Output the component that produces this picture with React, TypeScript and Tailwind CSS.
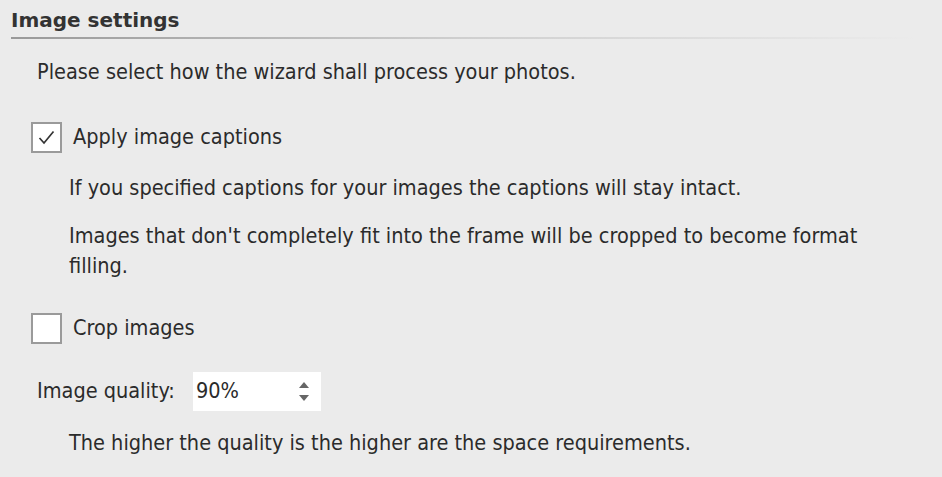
import React, { useState } from "react";

function CheckBox({ checked, onClick }: { checked: boolean; onClick: () => void }) {
  return (
    <button
      onClick={onClick}
      className="w-[31px] h-[31px] border-2 border-[#9a9a9a] bg-white flex items-center justify-center"
    >
      {checked && (
        <svg width="17" height="15" viewBox="0 0 17 15">
          <path d="M1.5 8 L6 13 L15.5 1.5" fill="none" stroke="#333" strokeWidth="1.7" />
        </svg>
      )}
    </button>
  );
}

export default function App() {
  const [captions, setCaptions] = useState(true);
  const [crop, setCrop] = useState(false);
  const [quality, setQuality] = useState(90);

  return (
    <div
      className="w-[942px] h-[477px] bg-[#ebebeb] text-[#2b2b2b] text-[21.5px] overflow-hidden"
      style={{ fontFamily: "'DejaVu Sans Condensed', 'DejaVu Sans', Verdana, sans-serif" }}
    >
      {/* Titel */}
      <div className="pl-[11px] pt-[6px]" style={{ fontFamily: "'DejaVu Sans', Verdana, sans-serif" }}>
        <h1 className="font-bold text-[20px] leading-[28px] text-[#333]">Image settings</h1>
        <div className="mt-[3px] h-[2px] w-[905px] bg-gradient-to-r from-[#999] via-[#cfcfcf] to-[#ebebeb]" />
      </div>

      <p className="ml-[37px] mt-[18px] leading-[30px]">Please select how the wizard shall process your photos.</p>

      <div className="ml-[31px] mt-[34px] flex items-center gap-[11px]">
        <CheckBox checked={captions} onClick={() => setCaptions(!captions)} />
        <span>Apply image captions</span>
      </div>

      <div className="ml-[69px] mt-[20px] space-y-[18px] leading-[30px] pr-[40px]">
        <p>If you specified captions for your images the captions will stay intact.</p>
        <p>Images that don't completely fit into the frame will be cropped to become format filling.</p>
      </div>

      <div className="ml-[31px] mt-[31px] flex items-center gap-[11px]">
        <CheckBox checked={crop} onClick={() => setCrop(!crop)} />
        <span>Crop images</span>
      </div>

      <div className="ml-[37px] mt-[27px] flex items-center">
        <span className="w-[156px]">Image quality:</span>
        <div className="w-[128px] h-[39px] bg-white flex items-center pl-[3px] pr-[12px]">
          <span className="flex-1">{quality}%</span>
          <div className="flex flex-col gap-[7px]">
            <button onClick={() => setQuality(Math.min(100, quality + 1))}>
              <svg width="10" height="6" viewBox="0 0 10 6"><path d="M5 0 L10 6 L0 6 Z" fill="#666" /></svg>
            </button>
            <button onClick={() => setQuality(Math.max(0, quality - 1))}>
              <svg width="10" height="6" viewBox="0 0 10 6"><path d="M0 0 L10 0 L5 6 Z" fill="#666" /></svg>
            </button>
          </div>
        </div>
      </div>

      <p className="ml-[69px] mt-[17px] leading-[30px]">The higher the quality is the higher are the space requirements.</p>
    </div>
  );
}
